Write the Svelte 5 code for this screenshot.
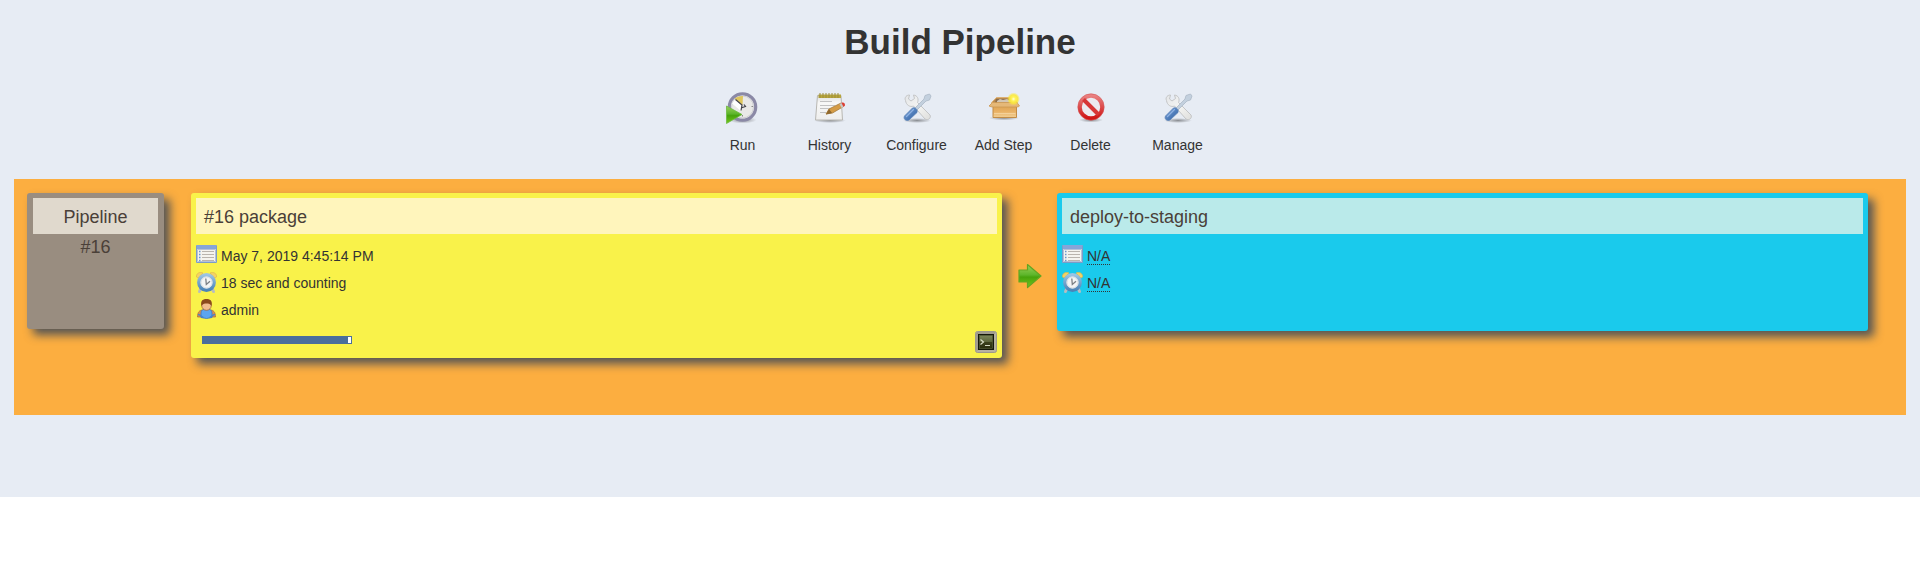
<script>
  const actions = [
    { label: 'Run', icon: 'run' },
    { label: 'History', icon: 'history' },
    { label: 'Configure', icon: 'tools' },
    { label: 'Add Step', icon: 'box' },
    { label: 'Delete', icon: 'delete' },
    { label: 'Manage', icon: 'tools' }
  ];
  const progress = 98;
</script>

<svg class="defs" width="0" height="0" aria-hidden="true">
  <defs>
    <linearGradient id="green" x1="0" y1="0" x2="0" y2="1">
      <stop offset="0" stop-color="#9bd05a" /><stop offset=".45" stop-color="#5db52b" /><stop offset=".55" stop-color="#46a30c" /><stop offset="1" stop-color="#76c61c" />
    </linearGradient>
    <linearGradient id="paper" x1="0" y1="0" x2="0" y2="1">
      <stop offset="0" stop-color="#dededc" /><stop offset=".3" stop-color="#f8f8f7" /><stop offset="1" stop-color="#eeeeed" />
    </linearGradient>
    <linearGradient id="steel" x1="0" y1="0" x2="1" y2="1">
      <stop offset="0" stop-color="#e4e6e8" /><stop offset=".5" stop-color="#f4f4f2" /><stop offset="1" stop-color="#dededc" />
    </linearGradient>
    <linearGradient id="blue" x1="0" y1="0" x2="1" y2="1">
      <stop offset="0" stop-color="#7ba6dc" /><stop offset="1" stop-color="#2c5c9f" />
    </linearGradient>
    <linearGradient id="carton" x1="0" y1="0" x2="0" y2="1">
      <stop offset="0" stop-color="#d9a050" /><stop offset=".55" stop-color="#e9b164" /><stop offset="1" stop-color="#f2cf94" />
    </linearGradient>
    <linearGradient id="red" x1="0" y1="0" x2="0" y2="1">
      <stop offset="0" stop-color="#e98080" /><stop offset="1" stop-color="#cf1515" />
    </linearGradient>
    <radialGradient id="glow">
      <stop offset="0" stop-color="#fffde0" /><stop offset=".3" stop-color="#fff45a" /><stop offset=".65" stop-color="#fbe93a" stop-opacity=".9" /><stop offset="1" stop-color="#fbe93a" stop-opacity="0" />
    </radialGradient>
    <radialGradient id="shade">
      <stop offset="0" stop-color="#000" stop-opacity=".4" /><stop offset="1" stop-color="#000" stop-opacity="0" />
    </radialGradient>
    <linearGradient id="rim" x1="0" y1="0" x2="0" y2="1">
      <stop offset="0" stop-color="#9cc4e4" /><stop offset="1" stop-color="#4a84b8" />
    </linearGradient>
    <linearGradient id="screen" x1="0" y1="0" x2="0" y2="1">
      <stop offset="0" stop-color="#7b8558" /><stop offset=".48" stop-color="#5d663d" /><stop offset=".52" stop-color="#3b401c" /><stop offset="1" stop-color="#2b2f10" />
    </linearGradient>
  </defs>
</svg>

{#snippet actionIcon(name)}
  <svg width="32" height="32" viewBox="0 0 32 32" aria-hidden="true">
    {#if name === 'run'}
      <ellipse cx="15.500" cy="28" rx="14" ry="3.500" fill="url(#shade)" />
      <circle cx="15.500" cy="15" r="13.200" fill="#e9e9e7" stroke="#8b89a6" stroke-width="3.200" />
      <circle cx="15.500" cy="15" r="11" fill="none" stroke="#cfcfd4" />
      <path d="M15.500 13 7.500 6.500A12 12 0 0 1 16 4Z" fill="#dfc65c" />
      <path d="M5 11.500 8 7.500l7 5.500-1 6Z" fill="#fff" />
      <path d="m8.500 7.500 6.500 5.500-1 5.500M14 16l4.500-1.500-1.500-2" fill="none" stroke="#44444a" stroke-width="1.200" />
      <path d="M24.500 14.500h1.500M15.500 23v1.500" stroke="#888" />
      <path d="M-.5 14V31.500L15 22.500Z" fill="url(#green)" stroke="#6cba40" stroke-width=".8" />
    {:else if name === 'history'}
      <ellipse cx="16" cy="28.500" rx="16" ry="2.500" fill="url(#shade)" />
      <path d="M3.500 3.500h23.500l1.500 24.500H1.500Z" fill="url(#paper)" stroke="#b8b7b2" />
      <path d="M4.500 2.500h22.500v3.500H4.500Z" fill="#b7a53c" />
      <path d="M6 1v5M9 1v5M12 1v5M15 1v5M18 1v5M21 1v5M24 1v5" stroke="#9b8d3c" />
      <path d="M6 9.500h12M6 13.500h15M6 16.500h11M6 20.500h6" stroke="#c2c2c2" stroke-width="1.200" />
      <path d="m12 22 3-5L27 11l2.500 3.500-11 6.500Z" fill="#d59c45" stroke="#a67b3b" stroke-width=".8" />
      <path d="m15 17 3 4-6 1.500Z" fill="#8f682d" />
      <path d="m26.500 11.500 1.500-1q3-.5 3 3l-1.500 1.500Z" fill="#dc3f34" />
      <path d="m25.500 12 2-1 2 4-2 1Z" fill="#c8c8c6" />
    {:else if name === 'tools'}
      <ellipse cx="16" cy="28.500" rx="14" ry="2.500" fill="url(#shade)" />
      <path d="M4.500 8.500C3 5 6 3 8.500 3l-1 4 2.500 2 3.500-2.500-1-3.500c4 .5 5.500 4 4 7.500L29 23c1.500 3-2 6-5 4L12.500 14C9 15.500 5 13 4.500 8.500Z" fill="url(#steel)" stroke="#c0c1c2" stroke-width=".9" />
      <path d="m13 17 10-10 1-3.500 4.500-1.500 1.500 2-1.500 4-3.500 1-10 10Z" fill="#c3d0de" stroke="#acb9c6" stroke-width=".8" />
      <path d="m3.500 24 8-8c2.500-1 5.500 1.500 4.500 4.500l-8 7.500c-3 1.500-6-1-4.500-4Z" fill="url(#blue)" stroke="#5c83b6" stroke-width=".8" />
      <path d="m5.500 24.500 7-7" stroke="#8fb2e2" stroke-width="1.300" stroke-linecap="round" />
    {:else if name === 'box'}
      <ellipse cx="16" cy="26" rx="15" ry="2.500" fill="url(#shade)" />
      <path d="m3.500 10.500 5-5h17l4 5Z" fill="#b98a4f" stroke="#ddb175" />
      <path d="M8 7h15v4H7Z" fill="#8a6c4c" />
      <path d="m9 9 3-2 3 1 4-1 4 2-1 2H9Z" fill="#d3c6b3" />
      <path d="M5 12h23.500v13.500H5Z" fill="url(#carton)" stroke="#c28c46" />
      <path d="M4.500 10.500h24.500l2.500 3.500q-1 1-3 1H5q-2 0-4-1Z" fill="#e5b878" stroke="#cb9750" stroke-width=".8" />
      <path d="M6 21.500h21.500" stroke="#f4d19a" />
      <circle cx="25.500" cy="7" r="6.500" fill="url(#glow)" />
    {:else}
      <ellipse cx="16" cy="28" rx="12" ry="2.500" fill="url(#shade)" />
      <circle cx="16" cy="15" r="11.200" fill="#eee9ed" fill-opacity=".7" stroke="url(#red)" stroke-width="4" />
      <path d="m8.500 7.500 15 15" stroke="#d73636" stroke-width="4" />
      <circle cx="16" cy="15" r="13.200" fill="none" stroke="#d45555" stroke-width=".6" />
    {/if}
  </svg>
{/snippet}

{#snippet calendarIcon()}
  <svg width="21" height="21" viewBox="0 0 21 21" aria-hidden="true">
    <path d="M.5 .5h20v17H.5Z" fill="#f5f3ef" stroke="#7c9cc8" />
    <path d="M1 0h19v4H1Z" fill="#86a5d8" />
    <path d="M1.500 4.500h18v12h-18Z" fill="none" stroke="#b5c1d8" />
    <path d="M6 6.500h12M6 9.500h12M6 12.500h12M6 15.500h12" stroke="#bab4ae" stroke-width="1.200" />
    <path d="M3 6.500h1.500M3 9.500h1.500M3 12.500h1.500M3 15.500h1.500" stroke="#6a96cc" stroke-width="1.500" />
  </svg>
{/snippet}

{#snippet clockIcon()}
  <svg width="21" height="21" viewBox="0 0 21 21" aria-hidden="true">
    <path d="m5 16-1.500 3.500M16 16l1.500 3.500" stroke="#b7bcc0" stroke-width="3" stroke-linecap="round" />
    <path d="M.5 5C0 1.500 3.500-.5 7 1L2 6ZM20.500 5c.5-3.500-3-5.500-6.500-4l5 5Z" fill="#f4d263" stroke="#dfb84c" stroke-width=".7" />
    <circle cx="10.500" cy="10.500" r="7.700" fill="#f4f5f5" stroke="url(#rim)" stroke-width="3.400" />
    <circle cx="10.500" cy="10.500" r="5.600" fill="none" stroke="#d2d9df" />
    <path d="M9.800 6.500 10.300 12.500 14 9.300" fill="none" stroke="#7b7f84" stroke-width="1.300" />
  </svg>
{/snippet}

{#snippet userIcon()}
  <svg width="21" height="21" viewBox="0 0 21 21" aria-hidden="true">
    <path d="M1.500 18c0-5 2-7 5.500-7h7c3.500 0 5.500 2 5.500 7Z" fill="#d98f55" stroke="#a8693d" stroke-width=".7" />
    <path d="M5 18.500V14c0-3 2-4 5.500-4s5.500 1 5.500 4v4.500l-5.500 1Z" fill="#5ba5f0" stroke="#3a76bc" stroke-width=".8" />
    <path d="M2 15.500c3 0 3 3 5.500 3M19 15.500c-3 0-3 3-5.500 3" fill="none" stroke="#4684cc" stroke-width="1.500" />
    <circle cx="10.500" cy="6.500" r="4.800" fill="#f1bd8f" stroke="#9b5a2b" stroke-width=".7" />
    <path d="M5.500 7C4 1 7.500 0 10.500 0S17 1 15.500 7C14 4.500 12 4.500 10.500 4.500S7 4.500 5.500 7Z" fill="#8b4a1c" />
  </svg>
{/snippet}

<main>
  <h1>Build Pipeline</h1>
  <nav>
    {#each actions as action}
      <a href="#top">{@render actionIcon(action.icon)}<span>{action.label}</span></a>
    {/each}
  </nav>

  <section class="pipeline">
    <article class="card revision">
      <h2>Pipeline</h2>
      <p>#16</p>
    </article>

    <article class="card build running">
      <h2>#16 package</h2>
      <ul>
        <li>{@render calendarIcon()}<span>May 7, 2019 4:45:14 PM</span></li>
        <li>{@render clockIcon()}<span>18 sec and counting</span></li>
        <li>{@render userIcon()}<span>admin</span></li>
      </ul>
      <footer>
        <div class="track" role="progressbar" aria-label="Build progress" aria-valuenow={progress} aria-valuemin="0" aria-valuemax="100">
          <div class="fill" style:width="{progress}%"></div>
        </div>
        <button type="button" aria-label="Console output">
          <svg width="22" height="22" viewBox="0 0 22 22" aria-hidden="true">
            <rect x=".5" y=".5" width="21" height="21" rx="2" fill="#b7b1a0" stroke="#9d998c" />
            <path d="M2 19.500V2h18" fill="none" stroke="#8c887c" />
            <rect x="3" y="3" width="16" height="16" fill="#15180a" />
            <rect x="4.500" y="4.500" width="13" height="13" fill="url(#screen)" stroke="#606842" stroke-width=".6" />
            <path d="m5.500 8.500 3 2.500-3 2.500M10 14.500h5" fill="none" stroke="#d5dac5" stroke-width="1.200" />
          </svg>
        </button>
      </footer>
    </article>

    <div class="next">
      <svg width="25" height="26" viewBox="0 0 25 26" aria-hidden="true">
        <path d="M2 7h8.500V1.500L24 13 10.500 24.500V19H2Z" fill="url(#green)" stroke="#62a522" stroke-width="1.200" stroke-linejoin="round" />
      </svg>
    </div>

    <article class="card build pending">
      <h2>deploy-to-staging</h2>
      <ul>
        <li>{@render calendarIcon()}<abbr>N/A</abbr></li>
        <li>{@render clockIcon()}<abbr>N/A</abbr></li>
      </ul>
    </article>
  </section>
</main>

<style>
  :global(body) {
    margin: 0;
    background: #fff;
  }
  .defs {
    position: absolute;
  }
  svg {
    display: block;
    flex: none;
    overflow: visible;
  }
  main {
    padding: 22px 14px 82px;
    background: #e7ecf4;
    color: #333;
    font: 14px/20px "Liberation Sans", Arial, sans-serif;
  }
  h1 {
    margin: 0;
    text-align: center;
    font-size: 35px;
    line-height: 40px;
  }
  nav {
    display: grid;
    grid-template-columns: repeat(6, 87px);
    justify-content: center;
    padding: 30px 0 24px;
  }
  nav a {
    display: flex;
    flex-direction: column;
    align-items: center;
    gap: 11px;
    color: #333;
    text-decoration: none;
  }
  .pipeline {
    display: flex;
    align-items: flex-start;
    padding: 14px 38px 57px 13px;
    background: #fcae40;
  }
  .card {
    box-sizing: border-box;
    padding: 5px;
    border-radius: 3px;
    box-shadow: 6px 6px 10px #555;
  }
  h2 {
    margin: 0;
    padding: 2px 8px 0;
    color: #4a4038;
    font-size: 18px;
    font-weight: 400;
    line-height: 34px;
  }
  .revision {
    width: 137px;
    min-height: 136px;
    margin-right: 27px;
    padding: 5px 6px;
    background: #998d80;
    text-align: center;
  }
  .revision h2 {
    background: #e0d9cd;
  }
  .revision p {
    margin: 0;
    color: #4a4038;
    font-size: 18px;
    line-height: 26px;
  }
  .build {
    flex: 1 1 0;
    min-height: 138px;
  }
  .running {
    background: #f9f24a;
  }
  .running h2 {
    background: #fff5bc;
  }
  .pending {
    background: #1acaec;
  }
  .pending h2 {
    background: #baeaea;
  }
  ul {
    margin: 0;
    padding: 8px 0 0;
    list-style: none;
  }
  li {
    display: flex;
    align-items: center;
    gap: 4px;
    height: 27px;
  }
  abbr {
    padding-top: 1px;
    border-bottom: 1px dotted #333;
    line-height: 16px;
  }
  footer {
    display: flex;
    align-items: center;
    justify-content: space-between;
    padding: 8px 0 0 6px;
  }
  .track {
    box-sizing: border-box;
    width: 150px;
    height: 8px;
    margin-bottom: 4px;
    border: 1px solid #4a6e9c;
    background: #fff;
  }
  .fill {
    height: 100%;
    background: #4a6e9c;
  }
  button {
    padding: 0;
    border: 0;
    background: none;
  }
  .next {
    display: flex;
    flex: none;
    align-self: center;
    justify-content: center;
    width: 55px;
  }
</style>
